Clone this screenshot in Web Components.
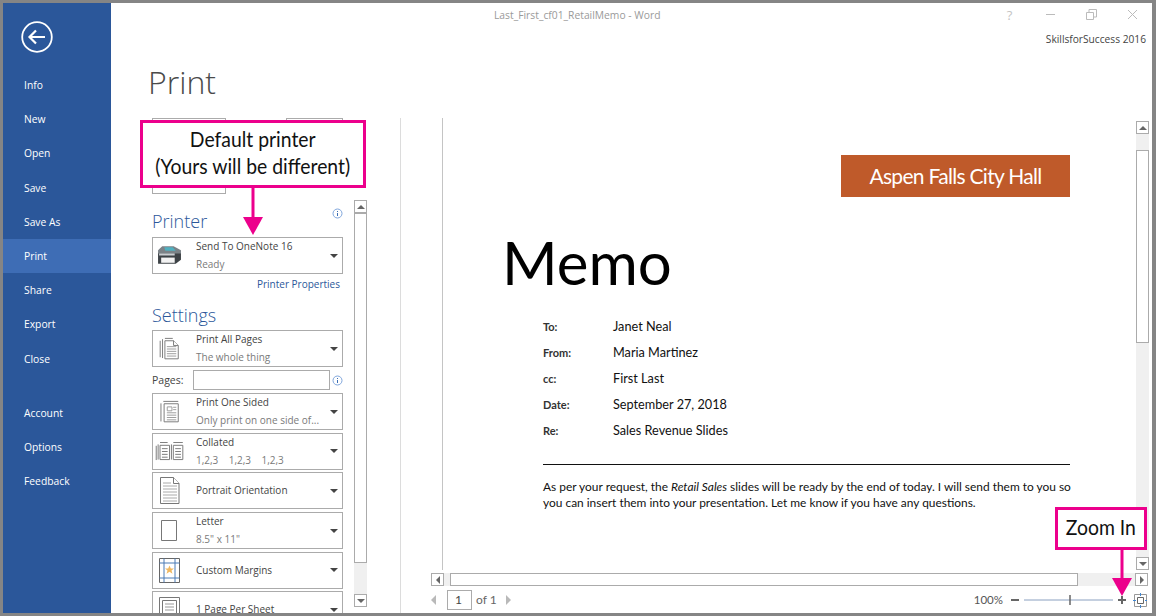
<!DOCTYPE html>
<html>
<head>
<meta charset="utf-8">
<title>Print</title>
<style>
  html, body { margin: 0; padding: 0; background: #fff; }
</style>
</head>
<body>
<word-window>
  <backstage-nav slot="nav"></backstage-nav>
  <title-bar slot="title"></title-bar>
  <print-panel slot="panel"></print-panel>
  <print-preview slot="preview"></print-preview>
  <call-out slot="overlay" style="left:140px;top:120px;width:226px;height:68px" arrow-x="113" arrow-len="47">Default printer<br>(Yours will be different)</call-out>
  <call-out slot="overlay" style="left:1055px;top:507px;width:92px;height:43px" arrow-x="67" arrow-len="46">Zoom In</call-out>
</word-window>

<script>
// small helpers for the icon set
const ICONS = {
  printer: `<svg width="25" height="19" viewBox="1 1 24 18">
    <path d="M6 1h11l7 4v4H2V5z" fill="#7b8287"/>
    <path d="M8 2h8l3 3.500H9z" fill="#4fb0c0"/>
    <path d="M2 8h22v6l-5 4H2z" fill="#3d4246"/>
    <path d="M5 12h13v5H5z" fill="#f2f2f2"/>
    <path d="M3 8h15v2H3z" fill="#c9cdd0"/>
  </svg>`,
  allPages: `<svg width="22" height="24" viewBox="0 0 28 30" fill="#fff" stroke="#777" stroke-width="1.200">
    <path d="M1.500 4.500v21M4.500 2.500v24M7.500 1.500h10"/>
    <path d="M7.500 4.500h11l6 6v17h-17z"/>
    <path d="M18.500 4.500v6h6" />
    <path d="M10 12h12M10 15h12M10 18h12M10 21h12M10 24h12" stroke="#999"/>
  </svg>`,
  oneSided: `<svg width="22" height="26" viewBox="0 0 28 30" fill="#fff" stroke="#777" stroke-width="1.200">
    <path d="M2.500 4v23M5.500 1.500h19"/>
    <path d="M6.500 4.500h18v23h-18z"/>
    <path d="M10.500 8.500h6v5h-6z" stroke="#999"/>
    <path d="M18 9h4M18 12h4M10 16h12M10 19h12M10 22h12M10 25h12" stroke="#999"/>
  </svg>`,
  collated: `<svg width="30" height="19" viewBox="0 0 30 20" fill="#fff" stroke="#777" stroke-width="1">
    <path d="M.5 4v15M2.500 2.500v16M4.500 .5h8"/>
    <path d="M4.500 3.500h10v15h-10z"/>
    <path d="M6.500 7h6M6.500 10h6M6.500 13h6M6.500 16h6" stroke="#777"/>
    <path d="M16.500 2.500v16M18.500 .5h10"/>
    <path d="M18.500 3.500h10v15h-10z"/>
    <path d="M20.500 7h6M20.500 10h6M20.500 13h6M20.500 16h6" stroke="#777"/>
  </svg>`,
  portrait: `<svg width="20" height="27" viewBox="0 0 20 27" fill="#fff" stroke="#777" stroke-width="1">
    <path d="M.5 .5h13l5.500 6v20H.5z"/>
    <path d="M13.500 .5v6h5.500"/>
    <path d="M3 6h8M3 9h14M3 12h14M3 15h14M3 18h14M3 21h14M3 24h14" stroke="#aaa"/>
  </svg>`,
  letter: `<svg width="17" height="22" viewBox="0 0 17 22" fill="#fff" stroke="#777" stroke-width="1">
    <path d="M.5 .5h15v20H.5z"/>
  </svg>`,
  margins: `<svg width="21" height="25" viewBox="0 0 21 25" fill="#fff" stroke="#4a7ab5" stroke-width="1">
    <path d="M.5 .5h20v24H.5z" stroke="#666"/>
    <path d="M5 .5v24M16 .5v24M.5 5h20M.5 20h20"/>
    <path d="M10.500 7.500l1.300 3h3.200l-2.500 2 1 3.200-3-1.900-3 1.900 1-3.200-2.500-2h3.200z" fill="#f0b860" stroke="none"/>
  </svg>`,
  sheet: `<svg width="22" height="26" viewBox="0 0 22 26" fill="#fff" stroke="#777" stroke-width="1">
    <path d="M.5 .5h20v25H.5z"/>
    <path d="M3.500 3.500h14v19h-14z"/>
    <path d="M6 7h9M6 10h9M6 13h9" stroke="#999"/>
  </svg>`
};

class WordWindow extends HTMLElement {
  constructor() {
    super();
    this.attachShadow({ mode: 'open' });
    this.shadowRoot.innerHTML = `
      <style>
        :host {
          display: flex;
          position: relative;
          box-sizing: border-box;
          width: 1156px;
          height: 616px;
          overflow: hidden;
          background: #fff;
          border-style: solid;
          border-color: #858585;
          border-width: 3px 4px 3px 3px;
          font-family: "Open Sans", sans-serif;
        }
        .main { flex: 1; min-width: 0; display: flex; flex-direction: column; }
        .body { flex: 1; min-height: 0; display: flex; padding-left: 41px; }
        h1 {
          margin: 0 0 0 37px;
          height: 70px;
          font-size: 32px;
          font-weight: 300;
          line-height: 68px;
          color: #4a4a4a;
        }
        .overlay { position: absolute; left: -3px; top: -3px; }
      </style>
      <slot name="nav"></slot>
      <div class="main">
        <slot name="title"></slot>
        <h1>Print</h1>
        <div class="body">
          <slot name="panel"></slot>
          <slot name="preview"></slot>
        </div>
      </div>
      <div class="overlay"><slot name="overlay"></slot></div>
    `;
  }
}

class BackstageNav extends HTMLElement {
  constructor() {
    super();
    this.attachShadow({ mode: 'open' });
    const items = ['Info', 'New', 'Open', 'Save', 'Save As', 'Print', 'Share', 'Export', 'Close'];
    const lower = ['Account', 'Options', 'Feedback'];
    const row = (t) => `<div class="item ${t === 'Print' ? 'on' : ''}">${t}</div>`;
    this.shadowRoot.innerHTML = `
      <style>
        :host {
          display: block;
          width: 108px;
          flex: none;
          background: #2b579a;
          color: #fff;
          font-size: 10.300px;
        }
        .back { display: block; margin: 18px 0 15px 18px; }
        .item { height: 34.200px; line-height: 34.200px; padding-left: 21px; }
        .on { background: #3e6db5; }
        .gap { height: 20px; }
      </style>
      <svg class="back" width="32" height="32" viewBox="0 0 32 32" fill="none" stroke="#fff">
        <circle cx="16" cy="16" r="14.800" stroke-width="1.800"/>
        <path d="M24 16H9M15 9.500L8.500 16l6.500 6.500" stroke-width="2.200"/>
      </svg>
      ${items.map(row).join('')}
      <div class="gap"></div>
      ${lower.map(row).join('')}
    `;
  }
}

class TitleBar extends HTMLElement {
  constructor() {
    super();
    this.attachShadow({ mode: 'open' });
    this.shadowRoot.innerHTML = `
      <style>
        :host { display: block; height: 45px; flex: none; }
        .top { display: flex; height: 25px; align-items: flex-start; margin-right: -1px; }
        .name { flex: 1; padding-left: 383px; font-size: 10.300px; line-height: 25px; color: #9a9a9a; }
        .btn { width: 41px; height: 23px; display: flex; align-items: center; justify-content: center; color: #c4c4c4; font-size: 13px; }
        .acct { text-align: right; padding: 2px 6px 0 0; font-size: 10.200px; color: #444; line-height: 18px; }
      </style>
      <div class="top">
        <div class="name">Last_First_cf01_RetailMemo - Word</div>
        <div class="btn">?</div>
        <div class="btn"><svg width="11" height="11" fill="none" stroke="#bbb"><path d="M1 5.500h9"/></svg></div>
        <div class="btn"><svg width="11" height="11" fill="none" stroke="#bbb"><path d="M.5 3.500h7v7h-7zM3 3V.5h7.500V8H8"/></svg></div>
        <div class="btn"><svg width="11" height="11" fill="none" stroke="#bbb"><path d="M1 1l9 9M10 1l-9 9"/></svg></div>
      </div>
      <div class="acct">SkillsforSuccess 2016</div>
    `;
  }
}

class PrintSelect extends HTMLElement {
  constructor() {
    super();
    this.attachShadow({ mode: 'open' });
  }

  connectedCallback() {
    const sub = this.getAttribute('sub');
    this.shadowRoot.innerHTML = `
      <style>
        :host {
          display: flex;
          align-items: center;
          box-sizing: border-box;
          height: 37px;
          border: 1px solid #ababab;
          flex: none;
          position: relative;
          color: #444;
          font-size: 10px;
        }
        .icon { width: 33px; margin-right: 10px; flex: none; display: flex; justify-content: center; align-items: center; }
        .txt { flex: 1; min-width: 0; margin-top: -1px; }
        .t { line-height: 18px; white-space: nowrap; }
        .s { line-height: 18px; color: #7a7a7a; white-space: pre; }
        .caret {
          width: 0; height: 0; margin-right: 4px; flex: none;
          border-left: 4px solid transparent;
          border-right: 4px solid transparent;
          border-top: 4px solid #444;
        }
      </style>
      <div class="icon">${ICONS[this.getAttribute('icon')] || ''}</div>
      <div class="txt">
        <div class="t">${this.getAttribute('label')}</div>
        ${sub ? `<div class="s">${sub}</div>` : ''}
      </div>
      <div class="caret"></div>
    `;
  }
}

class InfoDot extends HTMLElement {
  constructor() {
    super();
    this.attachShadow({ mode: 'open' });
    this.shadowRoot.innerHTML = `
      <style>:host { display: inline-block; width: 11px; height: 11px; line-height: 0; }</style>
      <svg width="11" height="11" viewBox="0 0 11 11" fill="none">
        <circle cx="5.500" cy="5.500" r="4.500" stroke="#7fa6dc"/>
        <path d="M5.500 3v1M5.500 5v3" stroke="#3c6fb5"/>
      </svg>
    `;
  }
}

class ScrollBar extends HTMLElement {
  constructor() {
    super();
    this.attachShadow({ mode: 'open' });
  }

  connectedCallback() {
    const horiz = this.getAttribute('orient') === 'h';
    const lead = this.getAttribute('lead') || 0;
    const thumb = this.getAttribute('thumb');
    this.shadowRoot.innerHTML = `
      <style>
        :host {
          display: flex;
          flex-direction: ${horiz ? 'row' : 'column'};
          box-sizing: border-box;
          flex: none;
          background: #f0f0f0;
          ${horiz ? 'height: 13px;' : 'width: 13px;'}
        }
        .btn {
          flex: none; width: 13px; height: 13px; box-sizing: border-box;
          background: #fff; border: 1px solid #ababab;
          display: flex; align-items: center; justify-content: center;
        }
        .arrow { width: 0; height: 0; border: 3px solid transparent; }
        .u { border-top: 0; border-bottom: 4px solid #666; border-left-width: 4px; border-right-width: 4px; }
        .d { border-bottom: 0; border-top: 4px solid #666; border-left-width: 4px; border-right-width: 4px; }
        .l { border-left: 0; border-right: 4px solid #666; border-top-width: 4px; border-bottom-width: 4px; }
        .r { border-right: 0; border-left: 4px solid #666; border-top-width: 4px; border-bottom-width: 4px; }
        .lead { flex: none; ${horiz ? `width: ${lead}px;` : `height: ${lead}px;`} }
        .thumb {
          flex: none; box-sizing: border-box; background: #fff; border: 1px solid #ababab;
          ${horiz ? `width: ${thumb}px;` : `height: ${thumb}px;`}
        }
        .rest { flex: 1; }
      </style>
      <div class="btn"><div class="arrow ${horiz ? 'l' : 'u'}"></div></div>
      <div class="lead"></div>
      <div class="thumb"></div>
      <div class="rest"></div>
      <div class="btn"><div class="arrow ${horiz ? 'r' : 'd'}"></div></div>
    `;
  }
}

class PrintPanel extends HTMLElement {
  constructor() {
    super();
    this.attachShadow({ mode: 'open' });
    this.shadowRoot.innerHTML = `
      <style>
        :host { display: flex; flex: none; height: 100%; overflow: hidden; }
        .col { width: 191px; display: flex; flex-direction: column; }
        .top { display: flex; justify-content: space-between; align-items: flex-start; height: 76px; flex: none; }
        .go { width: 74px; height: 76px; box-sizing: border-box; border: 1px solid #ababab; }
        .copies { width: 57px; height: 50px; box-sizing: border-box; border: 1px solid #ababab; }
        h2 {
          margin: 0; font-size: 18px; font-weight: 300; color: #2b579a;
          height: 43px; line-height: 54px; display: flex; justify-content: space-between;
        }
        h2 info-dot { margin: 14px 0 0 0; }
        .props { text-align: right; padding-right: 3px; color: #2b579a; font-size: 10px; line-height: 20px; height: 20px; flex: none; }
        .settings { height: 36px; line-height: 42px; }
        .pages { display: flex; align-items: center; height: 20px; margin: 3px 0; flex: none; color: #444; font-size: 10.500px; }
        .pages span { width: 41px; }
        .input { width: 137px; height: 20px; box-sizing: border-box; border: 1px solid #ababab; margin-right: 2px; }
        .sel { display: flex; flex-direction: column; gap: 2.700px; }
        scroll-bar { margin: 82px 0 0 11px; height: 407px; }
      </style>
      <div class="col">
        <div class="top"><div class="go"></div><div class="copies"></div></div>
        <h2>Printer <info-dot></info-dot></h2>
        <print-select icon="printer" label="Send To OneNote 16" sub="Ready"></print-select>
        <div class="props">Printer Properties</div>
        <h2 class="settings">Settings</h2>
        <print-select icon="allPages" label="Print All Pages" sub="The whole thing"></print-select>
        <div class="pages"><span>Pages:</span><div class="input"></div><info-dot></info-dot></div>
        <div class="sel">
          <print-select icon="oneSided" label="Print One Sided" sub="Only print on one side of..."></print-select>
          <print-select icon="collated" label="Collated" sub="1,2,3    1,2,3    1,2,3"></print-select>
          <print-select icon="portrait" label="Portrait Orientation"></print-select>
          <print-select icon="letter" label="Letter" sub='8.5" x 11"'></print-select>
          <print-select icon="margins" label="Custom Margins"></print-select>
          <print-select icon="sheet" label="1 Page Per Sheet"></print-select>
        </div>
      </div>
      <scroll-bar orient="v" thumb="350"></scroll-bar>
    `;
  }
}

class MemoPage extends HTMLElement {
  constructor() {
    super();
    this.attachShadow({ mode: 'open' });
    const rows = [['To:', 'Janet Neal'], ['From:', 'Maria Martinez'], ['cc:', 'First Last'], ['Date:', 'September 27, 2018'], ['Re:', 'Sales Revenue Slides']];
    this.shadowRoot.innerHTML = `
      <style>
        :host {
          display: flex;
          flex-direction: column;
          flex: 1;
          min-width: 0;
          height: 452px;
          overflow: hidden;
          box-sizing: border-box;
          border-left: 1px solid #c4c4c4;
          padding: 37px 66px 0 100px;
          font-family: Lato, sans-serif;
          color: #111;
          font-size: 12.700px;
        }
        .banner {
          align-self: flex-end;
          width: 229px; height: 42px; flex: none;
          background: #bf5a2a; color: #fff;
          font-size: 21px; letter-spacing: -0.700px; line-height: 42px; text-align: center;
        }
        .title { margin: 22px 0 0 -41px; font-size: 60px; line-height: 86px; height: 86px; color: #000; }
        .meta { display: grid; grid-template-columns: 70px 1fr; grid-auto-rows: 26px; margin-top: 8px; align-items: center; }
        .k { font-weight: 700; font-size: 11px; color: #333; }
        hr { border: 0; border-top: 1px solid #111; margin: 21px 0 14px; width: 100%; }
        p { margin: 0; font-size: 11.930px; line-height: 16px; white-space: nowrap; }
      </style>
      <div class="banner">Aspen Falls City Hall</div>
      <div class="title">Memo</div>
      <div class="meta">
        ${rows.map(r => `<div class="k">${r[0]}</div><div>${r[1]}</div>`).join('')}
      </div>
      <hr>
      <p>As per your request, the <i>Retail Sales</i> slides will be ready by the end of today. I will send them to you so</p>
      <p>you can insert them into your presentation. Let me know if you have any questions.</p>
    `;
  }
}

class PrintPreview extends HTMLElement {
  constructor() {
    super();
    this.attachShadow({ mode: 'open' });
    this.shadowRoot.innerHTML = `
      <style>
        :host {
          display: flex;
          flex-direction: column;
          flex: 1;
          min-width: 0;
          margin-left: 33px;
          height: 100%;
          box-sizing: border-box;
          border-left: 1px solid #dcdcdc;
        }
        .top { display: flex; height: 452px; flex: none; padding: 0 3px 0 41px; box-sizing: border-box; }
        .top scroll-bar { margin-top: 3px; height: 449px; }
        .h { padding: 3px 4px 0 30px; flex: none; }
        .foot {
          display: flex; align-items: center; flex: 1;
          padding: 0 5px 0 30px; font-size: 10px; color: #666;
          font-family: Lato, sans-serif;
        }
        .tri { width: 0; height: 0; border-top: 5px solid transparent; border-bottom: 5px solid transparent; }
        .prev { border-right: 5px solid #b9b9b9; margin-right: 11px; }
        .next { border-left: 5px solid #b9b9b9; margin-left: 9px; }
        .num { width: 25px; height: 20px; box-sizing: border-box; border: 1px solid #ababab; padding-left: 7px; line-height: 18px; font-size: 12px; color: #444; }
        .of { margin-left: 4px; font-size: 12px; }
        .sp { flex: 1; }
        .zoom { display: flex; align-items: center; }
        .pct { font-size: 11.500px; margin-right: 8px; color: #555; }
      </style>
      <div class="top"><memo-page></memo-page><scroll-bar orient="v" lead="16" thumb="193"></scroll-bar></div>
      <div class="h"><scroll-bar orient="h" lead="6" thumb="628"></scroll-bar></div>
      <div class="foot">
        <div class="tri prev"></div>
        <div class="num">1</div>
        <div class="of">of 1</div>
        <div class="tri next"></div>
        <div class="sp"></div>
        <div class="zoom">
          <div class="pct">100%</div>
          <svg width="136" height="16" viewBox="0 0 136 16" fill="none">
            <path d="M0 8h8" stroke="#666" stroke-width="2"/>
            <path d="M13 8h89" stroke="#8aa0c0"/>
            <path d="M59 3v10" stroke="#666" stroke-width="1.500"/>
            <path d="M107 8h8M111 4v8" stroke="#666" stroke-width="2"/>
            <path d="M123.500 2.500h12v12h-12z" stroke="#999"/>
            <path d="M126.500 5.500h6v6h-6z" stroke="#666"/>
            <path d="M129.500 1v3M129.500 13v3M122 8.500h3M134 8.500h3" stroke="#3f87d4"/>
          </svg>
        </div>
      </div>
    `;
  }
}

class CallOut extends HTMLElement {
  constructor() {
    super();
    this.attachShadow({ mode: 'open' });
  }

  connectedCallback() {
    const x = +this.getAttribute('arrow-x');
    const len = +this.getAttribute('arrow-len');
    this.shadowRoot.innerHTML = `
      <style>
        :host {
          display: flex;
          position: absolute;
          box-sizing: border-box;
          align-items: center;
          justify-content: center;
          text-align: center;
          background: #fff;
          border: 3px solid #ec008c;
          color: #111;
          font-family: Lato, sans-serif;
          font-size: 22px;
          line-height: 27px;
          white-space: nowrap;
        }
        .txt { display: block; transform: scaleX(.88); margin-top: -4px; }
        svg { position: absolute; left: ${x - 13 - 3}px; top: 100%; margin-top: 3px; overflow: visible; }
      </style>
      <span class="txt"><slot></slot></span>
      <svg width="26" height="${len}" viewBox="0 0 26 ${len}">
        <path d="M13 0V${len - 18}" stroke="#ec008c" stroke-width="3"/>
        <path d="M3 ${len - 18}H23L13 ${len}z" fill="#ec008c"/>
      </svg>
    `;
  }
}

customElements.define('word-window', WordWindow);
customElements.define('backstage-nav', BackstageNav);
customElements.define('title-bar', TitleBar);
customElements.define('print-select', PrintSelect);
customElements.define('info-dot', InfoDot);
customElements.define('scroll-bar', ScrollBar);
customElements.define('print-panel', PrintPanel);
customElements.define('memo-page', MemoPage);
customElements.define('print-preview', PrintPreview);
customElements.define('call-out', CallOut);
</script>
</body>
</html>
